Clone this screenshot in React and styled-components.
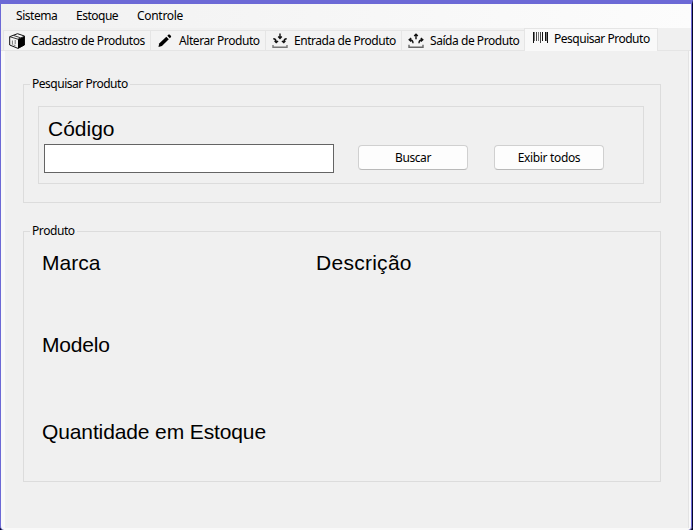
import React from "react";
import styled, { createGlobalStyle } from "styled-components";

const Global = createGlobalStyle`
  * { box-sizing: border-box; }
  body { margin: 0; overflow: hidden; background: #05052a; }
`;

const Window = styled.div`
  width: 693px;
  height: 530px;
  display: flex;
  flex-direction: column;
  border-style: solid;
  border-width: 4px 1px 0 1px;
  border-color: #6c69d6 #05052a #6c69d6 #6c69d6;
  box-shadow: inset -1px 0 #6c69d6;
  border-radius: 0 0 4px 4px;
  background: #f9f9f9;
  padding-right: 1px;
  color: #000;
  font: 12px/16px "Noto Sans", "Open Sans", sans-serif;
`;

const MenuBar = styled.nav`
  flex: none;
  height: 24px;
  padding-left: 15px;
  display: flex;
  align-items: center;
  gap: 19px;
  background: linear-gradient(90deg, #f1f1f1, #fcfcfc);
`;

const Caption = styled.span`
  flex: none;
  width: ${(p) => p.$w}px;
  white-space: nowrap;
  letter-spacing: ${(p) => p.$ls}px;
`;

const TabStrip = styled.div`
  flex: none;
  height: 23px;
  padding-left: 2px;
  display: flex;
  align-items: flex-end;
  background: #f0f0f0;
  box-shadow: inset 0 -1px #e5e5e5;
`;

const Tab = styled.div`
  width: ${(p) => p.$width}px;
  height: ${(p) => (p.$active ? 23 : 21)}px;
  padding: ${(p) => (p.$active ? "0 0 2px" : "1px 0 0")};
  padding-left: ${(p) => p.$inset}px;
  display: flex;
  align-items: center;
  gap: ${(p) => (p.$active ? 5 : 6)}px;
  border: 1px solid #e5e5e5;
  border-bottom-width: ${(p) => (p.$active ? 0 : 1)}px;
  border-right-width: ${(p) => (p.$active ? 1 : 0)}px;
  background: ${(p) => (p.$active ? "#f9f9f9" : "#f3f3f3")};
`;

const Icon = styled.svg`
  flex: none;
  width: 16px;
  height: 16px;
  overflow: visible;
  margin-top: ${(p) => p.$top ?? -1}px;
`;

const Page = styled.main`
  flex: 1;
  margin: 0 2px 2px 4px;
  padding: 25px 27px 0 18px;
  display: flex;
  flex-direction: column;
  gap: 20px;
  background: #f0f0f0;
  border-right: 1px solid #e3e3e3;
`;

const Group = styled.fieldset`
  flex: none;
  width: 638px;
  height: ${(p) => p.$height}px;
  margin: 0;
  padding: 0;
  border: 1px solid #dcdcdc;
`;

const Legend = styled.legend`
  height: 16px;
  margin-left: 6px;
  padding: 0 2px;
`;

const SearchPanel = styled.div`
  width: 606px;
  height: 78px;
  margin: 14px 0 0 14px;
  padding-left: 5px;
  display: flex;
  border: 1px solid #dcdcdc;
`;

const CodeField = styled.label`
  width: 290px;
  padding-top: 10px;
`;

const FieldLabel = styled.div`
  font: 21px/24px "Liberation Sans", Arial, sans-serif;
  letter-spacing: ${(p) => p.$ls || 0}px;
  white-space: nowrap;
  padding-left: ${(p) => p.$indent || 0}px;
`;

const Input = styled.input`
  display: block;
  width: 290px;
  height: 29px;
  margin-top: 3px;
  padding: 0 5px;
  border: 1px solid #646464;
  border-radius: 0;
  outline: none;
  background: #fff;
  font: 21px "Liberation Sans", Arial, sans-serif;
`;

const Actions = styled.div`
  display: flex;
  gap: 26px;
  padding: 38px 0 0 24px;
`;

const Button = styled.button`
  width: 110px;
  height: 25px;
  padding: 1px 0 0;
  display: flex;
  align-items: center;
  justify-content: center;
  border: 1px solid #d0d0d0;
  border-bottom-color: #b9b9b9;
  border-radius: 4px;
  background: #fdfdfd;
  color: #000;
  font: inherit;
`;

const Details = styled.div`
  display: grid;
  grid-template-columns: 274px 1fr;
  grid-template-rows: 82px 87px 24px;
  padding: 12px 0 0 18px;
`;

const BoxIcon = () => (
  <Icon viewBox="0 0 16 16">
    <path d="M.7 3.7 8.5.7 15.4 3v9L9 15.4.7 12z" fill="#f5f5f5" stroke="#111" strokeLinejoin="round" />
    <path d="M9 6.2 15.6 3.2v8.9L9 15.5z" fill="#000" />
    <path d="M.7 3.7 9 6.2l6.4-3M4.5 2.4l7 2.4" fill="none" stroke="#222" strokeWidth=".9" />
    <path d="M3.4 7.5v4.2M6.2 7v4.2M4.5 12l2 .7" stroke="#777" strokeWidth="1" />
  </Icon>
);

const PencilIcon = () => (
  <Icon viewBox="0 0 16 16">
    <path d="m1.5 14 .7-3.5L9.3 3.7l2.5 2.5L4.9 13z" fill="#000" />
    <path d="m10.3 2.8 1-1c.5-.5 1-.5 1.5 0l1 1c.5.5.4 1 0 1.4l-1 1z" fill="#000" />
  </Icon>
);

const InIcon = () => (
  <Icon viewBox="0 0 16 16">
    <path d="M8 .5v4.7M6.2 3.6 8 5.4l1.8-1.8M1.3 5.7c2.2 0 2.9 1 2.9 3.6M2.6 7.8l1.6 1.7 1.9-1.5M14.7 5.7c-2.2 0-2.9 1-2.9 3.6M13.4 7.8l-1.6 1.7L9.9 8" fill="none" stroke="#111" strokeWidth="1.4" />
    <path d="M1 12v2.2h14V12" fill="none" stroke="#777" strokeWidth="1.4" />
  </Icon>
);

const OutIcon = () => (
  <Icon viewBox="0 0 16 16">
    <path d="M8 6.3V1.2M6.2 3 8 1.2 9.8 3M5 10.2c0-2.5-1-3.4-3.5-3.4M3.2 5l-2 1.8 2 1.8M11 10.2c0-2.5 1-3.4 3.5-3.4M12.8 5l2 1.8-2 1.8" fill="none" stroke="#111" strokeWidth="1.4" />
    <path d="M1 11.8v2.4h14v-2.4" fill="none" stroke="#666" strokeWidth="1.4" />
  </Icon>
);

const BarcodeIcon = () => (
  <Icon viewBox="0 0 16 16" $top={-3} shapeRendering="crispEdges">
    <path d="M0 2h1v11H0zM9 2h1v9H9zM12 2h1v9h-1zM14 2h1v11h-1z" fill="#111" />
    <path d="M1 2h1v9H1zM5 2h1v9H5zM13 2h1v9h-1z" fill="#777" />
    <path d="M3 2h1v9H3zM7 2h1v11H7z" fill="#444" />
  </Icon>
);

const menus = [
  { text: "Sistema", w: 41, ls: -0.45 },
  { text: "Estoque", w: 42, ls: -0.5 },
  { text: "Controle", w: 46, ls: -0.3 },
];

const tabs = [
  { text: "Cadastro de Produtos", w: 114, ls: -0.42, width: 147, inset: 5, icon: <BoxIcon /> },
  { text: "Alterar Produto", w: 81, ls: -0.42, width: 115, inset: 6, icon: <PencilIcon /> },
  { text: "Entrada de Produto", w: 102, ls: -0.45, width: 136, inset: 6, icon: <InIcon /> },
  { text: "Saída de Produto", w: 90, ls: -0.45, width: 123, inset: 6, icon: <OutIcon /> },
  { text: "Pesquisar Produto", w: 96, ls: -0.48, width: 134, inset: 8, icon: <BarcodeIcon />, active: true },
];

export default function App() {
  return (
    <>
      <Global />
      <Window>
        <MenuBar>
          {menus.map((m) => (
            <Caption key={m.text} $w={m.w} $ls={m.ls}>{m.text}</Caption>
          ))}
        </MenuBar>
        <TabStrip>
          {tabs.map((t) => (
            <Tab key={t.text} $width={t.width} $active={t.active} $inset={t.inset}>
              {t.icon}
              <Caption $w={t.w} $ls={t.ls}>{t.text}</Caption>
            </Tab>
          ))}
        </TabStrip>
        <Page>
          <Group $height={127}>
            <Legend><Caption $ls={-0.48}>Pesquisar Produto</Caption></Legend>
            <SearchPanel>
              <CodeField>
                <FieldLabel $indent={4}>Código</FieldLabel>
                <Input aria-label="Código" />
              </CodeField>
              <Actions>
                <Button><Caption $ls={-0.42}>Buscar</Caption></Button>
                <Button><Caption $ls={-0.35}>Exibir todos</Caption></Button>
              </Actions>
            </SearchPanel>
          </Group>
          <Group $height={259}>
            <Legend><Caption $ls={-0.42}>Produto</Caption></Legend>
            <Details>
              <FieldLabel>Marca</FieldLabel>
              <FieldLabel $ls={0.27}>Descrição</FieldLabel>
              <FieldLabel $ls={-0.2}>Modelo</FieldLabel>
              <span />
              <FieldLabel $ls={-0.12}>Quantidade em Estoque</FieldLabel>
            </Details>
          </Group>
        </Page>
      </Window>
    </>
  );
}
